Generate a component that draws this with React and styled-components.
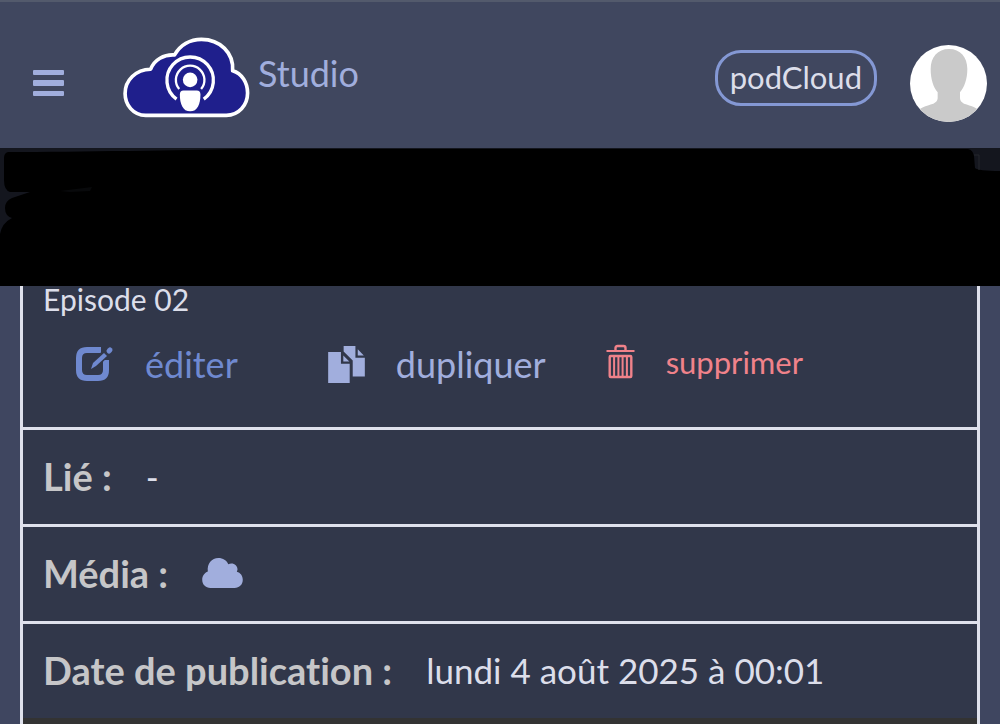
import styled, { createGlobalStyle } from "styled-components";

const GlobalStyle = createGlobalStyle`
  *,
  *::before,
  *::after {
    box-sizing: border-box;
  }

  :root {
    --color-header: #40475f;
    --color-page: #3f4660;
    --color-card: #31374a;
    --color-line: #dfe1ec;
    --color-text: #dcdeea;
    --color-label: #c6c6c8;
    --color-lilac: #a1aedd;
    --color-blue: #6f89d0;
    --color-red: #f0828a;
    --color-logo: #1f1f8c;
  }

  body {
    margin: 0;
    background-color: var(--color-page);
    color: var(--color-text);
    font-family: Lato, "Liberation Sans", sans-serif;
    font-variant-ligatures: none;
  }
`;

const Header = styled.header`
  display: flex;
  align-items: center;
  height: 148px;
  padding: 16px 13px 0 28px;
  background-color: var(--color-header);
  border-top: 2px solid #535a6c;
`;

const MenuButton = styled.button`
  display: flex;
  padding: 5px;
  border: none;
  background: none;
  color: var(--color-lilac);
  cursor: pointer;
`;

const Brand = styled.a`
  display: flex;
  align-items: flex-start;
  gap: 8px;
  margin-left: 54px;
  margin-bottom: 12px;
  color: var(--color-lilac);
  font-size: 36px;
  line-height: 72px;
  text-decoration: none;
`;

const Account = styled.div`
  display: flex;
  align-items: center;
  gap: 33px;
  margin-left: auto;
`;

const PodButton = styled.button`
  height: 56px;
  margin-bottom: 10px;
  padding: 0 12px 2px;
  border: 3px solid #8498d4;
  border-radius: 26px;
  background: none;
  color: var(--color-text);
  font-family: inherit;
  font-size: 31px;
  line-height: 48px;
  cursor: pointer;
`;

const AvatarLink = styled.a`
  display: flex;
  overflow: hidden;
  border-radius: 50%;
`;

const Band = styled.div`
  display: flex;
  height: 138px;
  background-color: #14161e;

  svg {
    width: 100%;
    height: 100%;
  }
`;

const Card = styled.article`
  margin: 0 20px;
  border: solid var(--color-line);
  border-width: 0 3px;
  background-color: var(--color-card);
`;

const Row = styled.section`
  display: flex;
  align-items: center;
  gap: 34px;
  height: 97px;
  padding: 0 20px 2px;
  border-top: 3px solid var(--color-line);
  font-size: 35px;
`;

const Summary = styled.section`
  height: 141px;
  padding: 0 20px;
`;

const Title = styled.p`
  margin: 0;
  font-size: 30px;
  line-height: 26px;
`;

const Actions = styled.nav`
  display: flex;
  align-items: center;
  gap: 60px;
  margin-top: 28px;
  padding-left: 33px;
`;

const Action = styled.a`
  display: flex;
  align-items: center;
  gap: 31px;
  margin-right: ${({ $wide }) => ($wide ? "30px" : "0")};
  padding-bottom: ${({ $small }) => ($small ? "4px" : "0")};
  color: ${({ $color }) => $color};
  font-size: ${({ $small }) => ($small ? "31px" : "36px")};
  line-height: 44px;
  text-decoration: none;
`;

const Label = styled.h2`
  margin: 0;
  color: var(--color-label);
  font-size: 38px;
  font-weight: 700;
`;

const Footer = styled.div`
  height: 6px;
  background-color: #333;
`;

const MenuIcon = () => (
  <svg width="31" height="26" viewBox="0 0 31 26" fill="currentColor">
    <rect width="31" height="5" rx="1" />
    <rect y="10" width="31" height="6" rx="1" />
    <rect y="21" width="31" height="5" rx="1" />
  </svg>
);

const Logo = () => (
  <svg width="127" height="81" viewBox="40 34 382 244" fill="none">
    <path
      d="M108 270C70 270 46 238 46 204C46 164 78 132 123 131C134 102 163 86 195 88C212 58 242 41 276 41C332 41 374 82 370 136C398 144 415 172 415 203C415 240 388 270 351 270Z"
      fill="var(--color-logo)"
      stroke="#fff"
      strokeWidth="11"
      strokeLinejoin="round"
    />
    <path d="M201 221A70 70 0 1 1 283 221" stroke="#fff" strokeWidth="10" />
    <path d="M209 191A43 43 0 1 1 275 191" stroke="#fff" strokeWidth="7" />
    <circle cx="242" cy="163" r="22" fill="#fff" />
    <path
      d="M222 195H262Q273 195 273 207C273 236 264 258 242 258C220 258 211 236 211 207Q211 195 222 195Z"
      fill="#fff"
      stroke="var(--color-logo)"
      strokeWidth="8"
      paintOrder="stroke"
    />
  </svg>
);

const Avatar = () => (
  <svg width="77" height="77" viewBox="0 0 231 231">
    <rect width="231" height="231" fill="#fff" />
    <path
      d="M117 12C151 12 172 36 172 72C172 102 163 127 150 142V160Q151 171 162 176C184 183 204 188 216 204V231H15V204C28 188 48 183 70 176Q82 171 83 160V142C70 127 62 102 62 72C62 36 83 12 117 12Z"
      fill="#cacaca"
    />
  </svg>
);

const EditIcon = () => (
  <svg width="38" height="36" viewBox="0 0 38 36" fill="none" stroke="currentColor">
    <path
      d="M25 4H11Q3 4 3 12V24Q3 32 11 32H22Q30 32 30 24V14"
      strokeWidth="6"
    />
    <path
      d="M15 23L17 17L28 6L31 9L20 20Z"
      fill="var(--color-card)"
      stroke="var(--color-card)"
      strokeWidth="4"
    />
    <path d="M15 23L17 17L28 7L31 10L20 20Z" fill="currentColor" stroke="none" />
    <path d="M33 5L34 4" strokeWidth="5" strokeLinecap="round" />
  </svg>
);

const CopyIcon = () => (
  <svg width="37" height="37" viewBox="0 0 109 110" fill="currentColor">
    <path d="M0 18H38V53H64V110H0Z" />
    <path d="M45 28L63 46H45Z" />
    <path d="M46 0H81V35H109V91H73V43L46 16Z" />
    <path d="M88 10L106 28H88Z" />
  </svg>
);

const TrashIcon = () => (
  <svg width="29" height="36" viewBox="0 0 28 36" fill="none" stroke="currentColor" strokeWidth="2">
    <path d="M0 7H28" />
    <path d="M9 7V4Q9 2 11 2H17Q19 2 19 4V7" strokeWidth="2.4" />
    <rect x="3.2" y="12" width="21.6" height="21" rx="1" strokeWidth="2.4" />
    <path d="M7.6 12V33M11.9 12V33M16.1 12V33M20.4 12V33" />
  </svg>
);

const CloudIcon = () => (
  <svg width="41" height="30" viewBox="0 0 123 91" fill="var(--color-lilac)">
    <path d="M25 91C10 91 0 80 0 66C0 54 7 45 17 41C14 17 29 0 49 0C63 0 74 7 79 19C91 12 108 20 107 36L105 42C116 45 123 54 123 66C123 80 113 91 98 91Z" />
  </svg>
);

const ScribbleBand = () => (
  <Band>
    <svg viewBox="0 0 1000 138" preserveAspectRatio="none">
      <path d="M8 4C80 4 180 2 240 1H968Q973 2 974 8L975 20Q978 23 1000 23V138H0V86Q2 75 12 70Q5 68 5 60Q5 53 12 50L30 44H10Q4 42 4 32V10Q4 5 8 4Z" />
      <path d="M60 43L92 39L90 43L70 44Z" fill="#08090b" />
      <path d="M974 7H979V22" fill="none" stroke="#24262d" />
    </svg>
  </Band>
);

export default function App() {
  return (
    <>
      <GlobalStyle />
      <Header>
        <MenuButton aria-label="Menu">
          <MenuIcon />
        </MenuButton>
        <Brand href="#">
          <Logo />
          Studio
        </Brand>
        <Account>
          <PodButton>podCloud</PodButton>
          <AvatarLink href="#" aria-label="Profil">
            <Avatar />
          </AvatarLink>
        </Account>
      </Header>
      <ScribbleBand />
      <Card>
        <Summary>
          <Title>Episode 02</Title>
          <Actions>
            <Action href="#" $color="var(--color-blue)" $wide>
              <EditIcon />
              éditer
            </Action>
            <Action href="#" $color="var(--color-lilac)">
              <CopyIcon />
              dupliquer
            </Action>
            <Action href="#" $color="var(--color-red)" $small>
              <TrashIcon />
              supprimer
            </Action>
          </Actions>
        </Summary>
        <Row>
          <Label>Lié :</Label>-
        </Row>
        <Row>
          <Label>Média :</Label>
          <CloudIcon />
        </Row>
        <Row>
          <Label>Date de publication :</Label>
          lundi 4 août 2025 à 00:01
        </Row>
        <Footer />
      </Card>
    </>
  );
}
